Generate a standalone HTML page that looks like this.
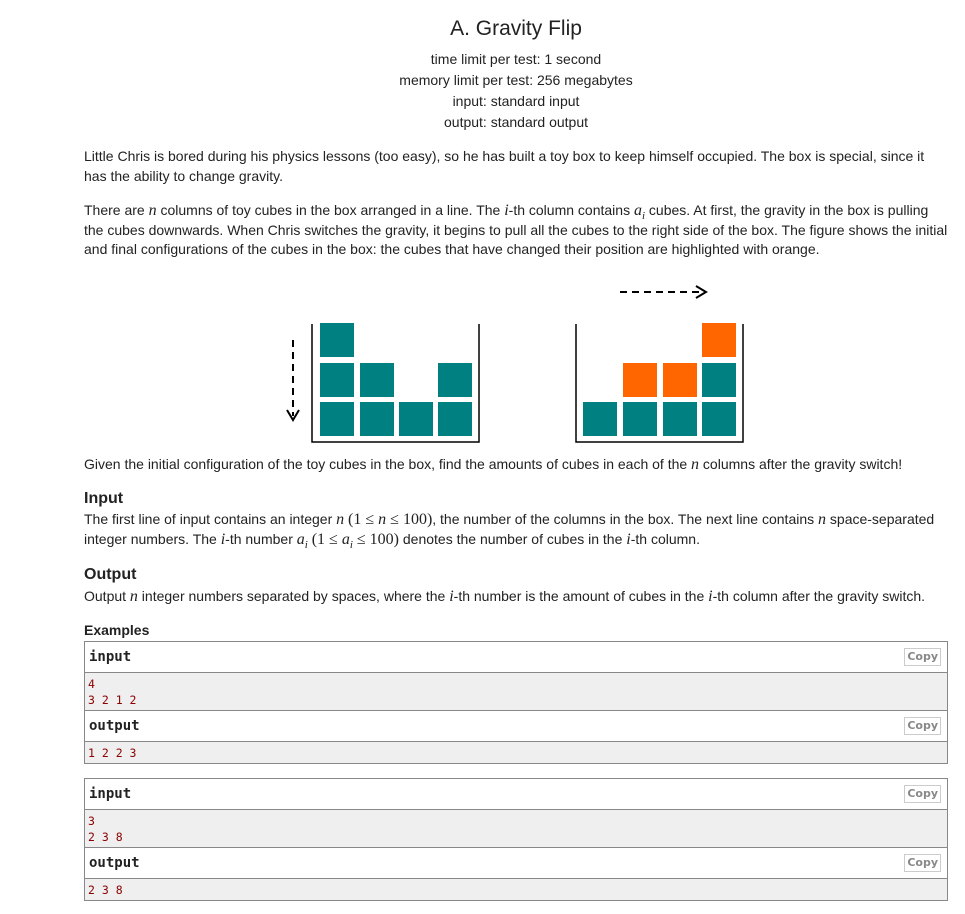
<!DOCTYPE html>
<html><head><meta charset="utf-8"><style>
body{margin:0;width:965px;height:914px;background:#fff;position:relative;font-family:"Liberation Sans",Arial,sans-serif;color:#222;overflow:hidden}
.a{position:absolute;white-space:nowrap}
.c{left:0;width:1032px;text-align:center;font-size:14px}
.t{font-size:14px;left:84px}
.m{font-family:"Liberation Serif",serif;font-style:italic;font-size:16px}
.r{font-family:"Liberation Serif",serif;font-size:16px}
.h{font-size:16px;font-weight:bold;left:84px}
.box{position:absolute;left:84px;width:862px;border:1px solid #888}
.hd{height:30px;border-bottom:1px solid #888;position:relative;font-family:"DejaVu Sans Mono","Liberation Mono",monospace;font-weight:bold;font-size:14px;line-height:30px;padding-left:4px}
.cp{position:absolute;right:6px;top:6px;height:16px;line-height:16px;border:1px solid #ccc;font-family:"DejaVu Sans",sans-serif;font-size:11px;color:#888;font-weight:bold;padding:0 2px}
.ct{background:#efefef;font-family:"DejaVu Sans Mono","Liberation Mono",monospace;font-size:11.5px;color:#8b0000;padding:3px 3px 2px;line-height:16px}
.ct.b{border-bottom:1px solid #888}
.q{position:absolute;width:34px;height:34px;background:#008080}
.o{background:#ff6600}
</style></head><body>
<div class="a" style="left:0;width:1032px;text-align:center;font-size:21px;top:17px">A. Gravity Flip</div>
<div class="a c" style="top:51px">time limit per test: 1 second</div>
<div class="a c" style="top:72px">memory limit per test: 256 megabytes</div>
<div class="a c" style="top:93px">input: standard input</div>
<div class="a c" style="top:114px">output: standard output</div>

<div class="a t" style="top:148px">Little Chris is bored during his physics lessons (too easy), so he has built a toy box to keep himself occupied. The box is special, since it</div>
<div class="a t" style="top:168px">has the ability to change gravity.</div>
<div class="a t" style="top:202px">There are <span class="m">n</span> columns of toy cubes in the box arranged in a line. The <span class="m">i</span>-th column contains <span class="m">a<sub style="font-size:11px">i</sub></span> cubes. At first, the gravity in the box is pulling</div>
<div class="a t" style="top:222px">the cubes downwards. When Chris switches the gravity, it begins to pull all the cubes to the right side of the box. The figure shows the initial</div>
<div class="a t" style="top:241px">and final configurations of the cubes in the box: the cubes that have changed their position are highlighted with orange.</div>

<svg class="a" style="left:0;top:0" width="965" height="460">
<g stroke="#000" stroke-width="2" fill="none">
<path d="M312 324V442H479V324" stroke-width="1.5"/><path d="M576 324V442H743V324" stroke-width="1.5"/>
<path d="M293 340V416" stroke-dasharray="7,5"/><path d="M287 410l6 10 6-10"/>
<path d="M620 292H703" stroke-dasharray="7,5"/><path d="M696 286l10 6-10 6"/>
</g></svg>
<div class="q" style="left:320px;top:323px"></div>
<div class="q" style="left:320px;top:363px"></div><div class="q" style="left:360px;top:363px"></div><div class="q" style="left:438px;top:363px"></div>
<div class="q" style="left:320px;top:402px"></div><div class="q" style="left:360px;top:402px"></div><div class="q" style="left:399px;top:402px"></div><div class="q" style="left:438px;top:402px"></div>
<div class="q o" style="left:702px;top:323px"></div>
<div class="q o" style="left:623px;top:363px"></div><div class="q o" style="left:663px;top:363px"></div><div class="q" style="left:702px;top:363px"></div>
<div class="q" style="left:583px;top:402px"></div><div class="q" style="left:623px;top:402px"></div><div class="q" style="left:663px;top:402px"></div><div class="q" style="left:702px;top:402px"></div>

<div class="a t" style="top:456px">Given the initial configuration of the toy cubes in the box, find the amounts of cubes in each of the <span class="m">n</span> columns after the gravity switch!</div>
<div class="a h" style="top:490px">Input</div>
<div class="a t" style="top:511px">The first line of input contains an integer <span class="m">n</span> <span class="r">(1 ≤ <i>n</i> ≤ 100)</span>, the number of the columns in the box. The next line contains <span class="m">n</span> space-separated</div>
<div class="a t" style="top:531px">integer numbers. The <span class="m">i</span>-th number <span class="m">a<sub style="font-size:11px">i</sub></span> <span class="r">(1 ≤ <i>a<sub style="font-size:11px">i</sub></i> ≤ 100)</span> denotes the number of cubes in the <span class="m">i</span>-th column.</div>
<div class="a h" style="top:566px">Output</div>
<div class="a t" style="top:588px">Output <span class="m">n</span> integer numbers separated by spaces, where the <span class="m">i</span>-th number is the amount of cubes in the <span class="m">i</span>-th column after the gravity switch.</div>
<div class="a h" style="top:622px;font-size:14px">Examples</div>

<div class="box" style="top:641px">
<div class="hd">input<span class="cp">Copy</span></div>
<div class="ct b">4<br>3 2 1 2</div>
<div class="hd">output<span class="cp">Copy</span></div>
<div class="ct">1 2 2 3</div>
</div>
<div class="box" style="top:778px">
<div class="hd">input<span class="cp">Copy</span></div>
<div class="ct b">3<br>2 3 8</div>
<div class="hd">output<span class="cp">Copy</span></div>
<div class="ct">2 3 8</div>
</div>
</body></html>
